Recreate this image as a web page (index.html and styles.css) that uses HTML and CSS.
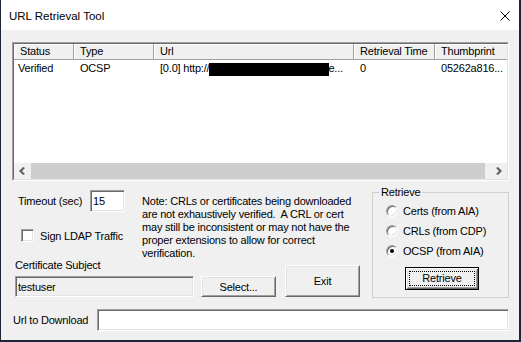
FILE: index.html
```html
<!DOCTYPE html>
<html lang="en">
  <head>
    <meta charset="utf-8" />
    <title>URL Retrieval Tool</title>
    <link rel="stylesheet" href="styles.css">
  </head>
  <body>
    <div class="window">
      <!-- Title bar -->
      <div class="titlebar">
        <span class="titlebar__text">URL Retrieval Tool</span>
        <svg class="titlebar__close" width="10" height="10" viewBox="0 0 10 10">
          <path d="M0.5 0.5 L9.5 9.5 M9.5 0.5 L0.5 9.5" stroke="#000" stroke-width="1" fill="none" />
        </svg>
      </div>

      <div class="client">
        <!-- List view -->
        <div class="listview">
          <div class="listview__inner">
            <div class="listview__body">
              <div class="lv-header">
                <div class="lv-col lv-col--status">Status</div>
                <div class="lv-col lv-col--type">Type</div>
                <div class="lv-col lv-col--url">Url</div>
                <div class="lv-col lv-col--time">Retrieval Time</div>
                <div class="lv-col lv-col--thumb">Thumbprint</div>
              </div>
              <div class="lv-row">
                <div class="lv-cell lv-col--status lv-cell--first">Verified</div>
                <div class="lv-cell lv-col--type">OCSP</div>
                <div class="lv-cell lv-col--url">[0.0] http://<span class="redacted"></span>e...</div>
                <div class="lv-cell lv-col--time">0</div>
                <div class="lv-cell lv-col--thumb">05262a816...</div>
              </div>
            </div>
            <div class="hscroll">
              <div class="hscroll__btn">
                <svg width="7" height="8" viewBox="0 0 7 8">
                  <polygon points="4,0 6,1 3,4 6,7 4,8 0,4" fill="#606060" />
                </svg>
              </div>
              <div class="hscroll__thumb"></div>
              <div class="hscroll__track"></div>
              <div class="hscroll__btn">
                <svg width="7" height="8" viewBox="0 0 7 8">
                  <polygon points="3,0 7,4 3,8 1,7 4,4 1,1" fill="#606060" />
                </svg>
              </div>
            </div>
          </div>
        </div>

        <!-- Options and actions -->
        <div class="lower">
          <div class="lower__left">
            <div class="lower__top">
              <div class="opts">
                <div class="timeout">
                  <span class="timeout__label">Timeout (sec)</span>
                  <div class="edit edit--small">15</div>
                </div>
                <div class="check">
                  <span class="check__box"></span>
                  <span class="check__label">Sign LDAP Traffic</span>
                </div>
              </div>
              <div class="note">
                Note: CRLs or certificates being downloaded<br>
                are not exhaustively verified.&nbsp; A CRL or cert<br>
                may still be inconsistent or may not have the<br>
                proper extensions to allow for correct<br>
                verification.
              </div>
            </div>
            <div class="lower__bottom">
              <div class="subject">
                <div class="subject__label">Certificate Subject</div>
                <div class="edit edit--readonly">testuser</div>
              </div>
              <button class="btn btn--select">Select...</button>
              <button class="btn btn--exit">Exit</button>
            </div>
          </div>

          <fieldset class="group">
            <legend class="group__legend">Retrieve</legend>
            <div class="radios">
              <div class="radio">
                <span class="radio__dot"></span>
                <span class="radio__label">Certs (from AIA)</span>
              </div>
              <div class="radio">
                <span class="radio__dot"></span>
                <span class="radio__label">CRLs (from CDP)</span>
              </div>
              <div class="radio">
                <span class="radio__dot radio__dot--on"></span>
                <span class="radio__label">OCSP (from AIA)</span>
              </div>
            </div>
            <button class="btn btn--default"><span class="btn__focus">Retrieve</span></button>
          </fieldset>
        </div>

        <div class="url">
          <span class="url__label">Url to Download</span>
          <div class="edit edit--url"></div>
        </div>
      </div>
    </div>
  </body>
</html>
```

FILE: styles.css
```css
body {
  margin: 0;
  background-color: #1c2533;
  font-family: "Liberation Sans", Arial, sans-serif;
  font-size: 11px;
  color: #000;
}

.window {
  margin-left: 1px;
  width: 518px;
  height: 340px;
  background-color: #f0f0f0;
  overflow: hidden;
}

.titlebar {
  height: 30px;
  background-color: #fff;
  display: flex;
  align-items: center;
  justify-content: space-between;
  padding: 0 9px 0 8px;
  box-sizing: border-box;
}
.titlebar__text {
  font-size: 11.5px;
  margin-top: 1px;
}
.titlebar__close {
  display: block;
  margin-top: 1px;
}

.client {
  padding: 12px 10px 0 11px;
  letter-spacing: -0.2px;
}

/* sunken 3D edge */
.listview,
.edit {
  box-sizing: border-box;
  border-style: solid;
  border-width: 1px;
  border-color: #a0a0a0 #fff #fff #a0a0a0;
}
.listview {
  width: 497px;
  height: 139px;
}
.listview__inner {
  height: 100%;
  box-sizing: border-box;
  border-style: solid;
  border-width: 1px;
  border-color: #696969 #e3e3e3 #e3e3e3 #696969;
  background-color: #fff;
  display: flex;
  flex-direction: column;
  overflow: hidden;
}
.listview__body {
  flex: 1;
  overflow: hidden;
}

.lv-header {
  display: flex;
  height: 16px;
  white-space: nowrap;
}
.lv-col {
  box-sizing: border-box;
  height: 16px;
  line-height: 15px;
  padding-left: 6px;
  background-color: #f0f0f0;
  border-right: 1px solid #a0a0a0;
  border-bottom: 1px solid #a0a0a0;
  box-shadow: inset 1px 1px #fff;
  flex-shrink: 0;
  overflow: hidden;
}
.lv-col--status { width: 60px; }
.lv-col--type { width: 80px; }
.lv-col--url { width: 200px; }
.lv-col--time { width: 81px; }
.lv-col--thumb { width: 80px; }

.lv-row {
  display: flex;
  height: 17px;
  white-space: nowrap;
}
.lv-cell {
  box-sizing: border-box;
  line-height: 17px;
  padding-left: 6px;
  flex-shrink: 0;
  overflow: hidden;
}
.lv-cell--first {
  padding-left: 4px;
}
.redacted {
  display: inline-block;
  vertical-align: top;
  width: 120px;
  height: 13px;
  margin-top: 3px;
  margin-right: -1px;
  background-color: #000;
}

.hscroll {
  display: flex;
  height: 16px;
  flex-shrink: 0;
  background-color: #f0f0f0;
}
.hscroll__btn {
  width: 17px;
  display: flex;
  align-items: center;
  justify-content: center;
}
.hscroll__thumb {
  width: 454px;
  background-color: #cdcdcd;
}
.hscroll__track {
  flex: 1;
}

.lower {
  display: flex;
  margin-top: 5px;
}
.lower__left {
  margin-left: 3px;
  width: 345px;
}
.lower__top {
  display: flex;
  height: 73px;
}
.opts {
  width: 127px;
}
.timeout {
  display: flex;
  align-items: center;
  margin-top: 4px;
}
.timeout__label {
  box-sizing: border-box;
  width: 75px;
  padding-left: 3px;
}
.edit {
  background-color: #fff;
  box-shadow: inset 1px 1px #696969, inset -1px -1px #e3e3e3;
  padding: 3px 2px 0;
  white-space: nowrap;
}
.edit--small {
  width: 35px;
  height: 22px;
  padding-top: 4px;
}
.check {
  display: flex;
  align-items: center;
  margin-top: 17px;
  padding-left: 6px;
}
.check__box {
  width: 13px;
  height: 13px;
  box-sizing: border-box;
  background-color: #fff;
  border-style: solid;
  border-width: 1px;
  border-color: #a0a0a0 #fff #fff #a0a0a0;
  box-shadow: inset 1px 1px #696969, inset -1px -1px #e3e3e3;
}
.check__label {
  margin-left: 6px;
}
.note {
  margin-top: 9px;
  line-height: 13px;
  white-space: nowrap;
}

.lower__bottom {
  display: flex;
  align-items: flex-end;
}
.subject {
  width: 179px;
}
.subject__label {
  line-height: 13px;
  margin-bottom: 4px;
}
.edit--readonly {
  height: 21px;
  background-color: #f0f0f0;
  padding-top: 4px;
}

/* raised 3D button */
.btn {
  appearance: none;
  margin: 0;
  padding: 0;
  box-sizing: border-box;
  font: inherit;
  letter-spacing: inherit;
  color: #000;
  background-color: #f0f0f0;
  border-style: solid;
  border-width: 1px;
  border-color: #fff #696969 #696969 #fff;
  box-shadow: inset 1px 1px #e3e3e3, inset -1px -1px #a0a0a0;
  flex-shrink: 0;
}
.btn--select {
  width: 75px;
  height: 21px;
  margin-left: 7px;
}
.btn--exit {
  width: 75px;
  height: 32px;
  margin-left: 9px;
}
.btn--default {
  display: block;
  width: 74px;
  height: 23px;
  margin: 6px 0 0 32px;
  border-color: #000;
  box-shadow: inset 1px 1px #fff, inset -1px -1px #696969, inset 2px 2px #e3e3e3, inset -2px -2px #a0a0a0;
  padding: 3px;
}
.btn__focus {
  display: block;
  height: 100%;
  box-sizing: border-box;
  border: 1px dotted #000;
  line-height: 13px;
}

.group {
  margin: 0 0 0 12px;
  padding: 0;
  width: 137px;
  height: 112px;
  box-sizing: border-box;
  border: 1px solid #d0d0d0;
}
.group__legend {
  margin-left: 6px;
  padding: 0 2px;
  line-height: 13px;
}
.radios {
  margin-top: 2px;
  padding-left: 13px;
}
.radio {
  display: flex;
  align-items: center;
  height: 20px;
}
.radio__dot {
  position: relative;
  width: 12px;
  height: 12px;
  box-sizing: border-box;
  border-radius: 50%;
  background-color: #fff;
  border-style: solid;
  border-width: 1px;
  border-color: #a0a0a0 #fff #fff #a0a0a0;
  box-shadow: inset 1px 1px #696969, inset -1px -1px #e3e3e3;
}
.radio__dot--on::after {
  content: "";
  position: absolute;
  left: 3px;
  top: 3px;
  width: 4px;
  height: 4px;
  border-radius: 50%;
  background-color: #000;
}
.radio__label {
  margin-left: 5px;
}

.url {
  display: flex;
  align-items: center;
  margin-top: 11px;
}
.url__label {
  box-sizing: border-box;
  width: 85px;
  padding-left: 1px;
}
.edit--url {
  width: 412px;
  height: 22px;
}
```
